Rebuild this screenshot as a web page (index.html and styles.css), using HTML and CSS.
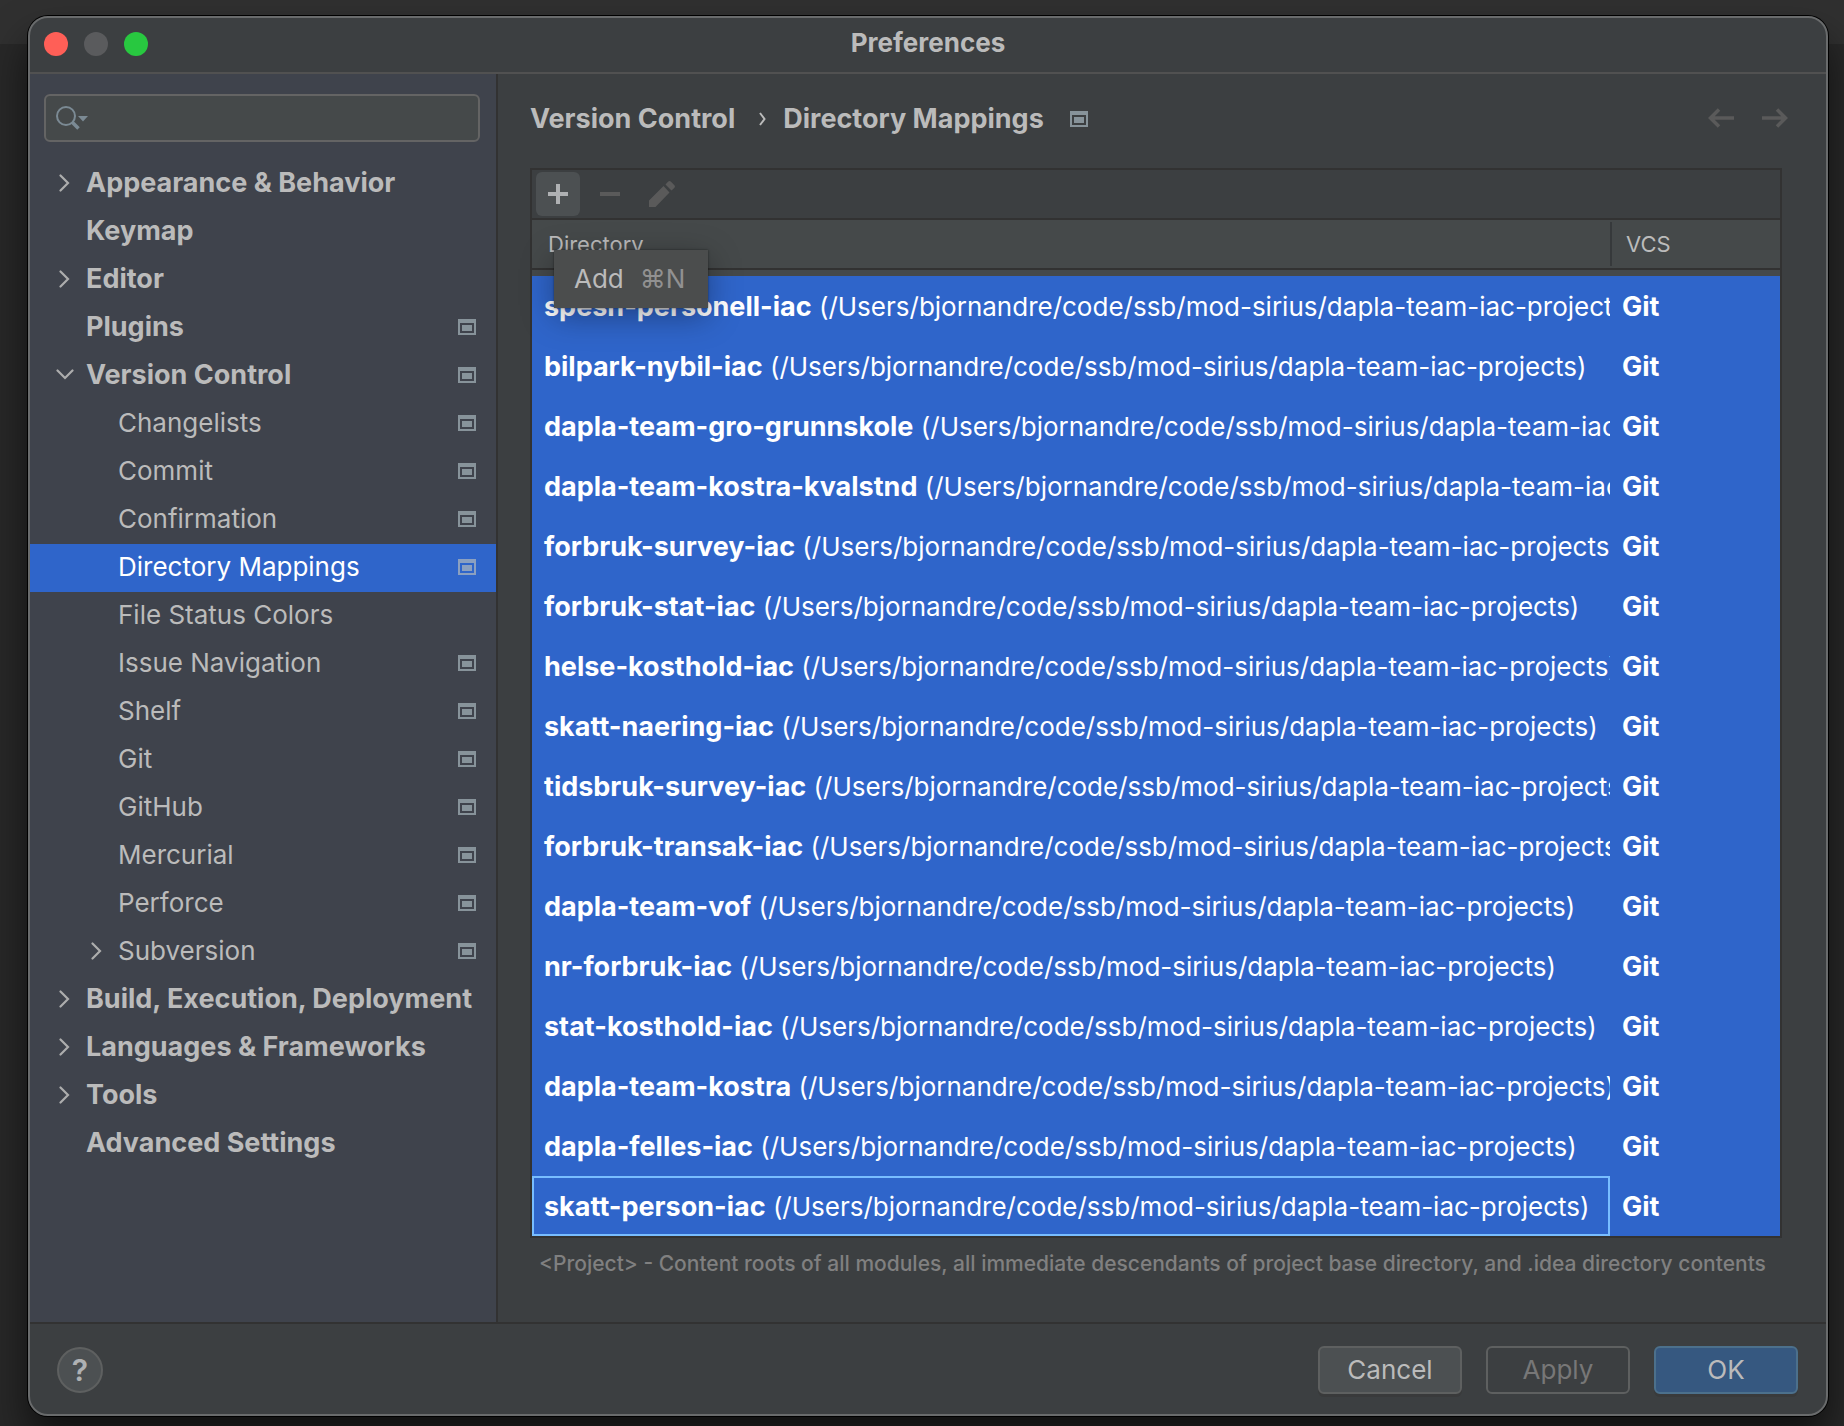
FILE: index.html
```html
<!DOCTYPE html>
<html lang="en">
<head>
<meta charset="utf-8">
<title>Preferences</title>
<link rel="stylesheet" href="styles.css">
</head>
<body>
<svg class="sprite" aria-hidden="true">
  <symbol id="closed" viewBox="0 0 18 18"><path d="M4.500 1.500L12 9L4.500 16.500" fill="none" stroke="currentColor" stroke-width="2.200" stroke-linecap="round"/></symbol>
  <symbol id="open" viewBox="0 0 18 18"><path d="M1.500 4.500L9 12L16.500 4.500" fill="none" stroke="currentColor" stroke-width="2.200" stroke-linecap="round"/></symbol>
  <symbol id="project" viewBox="0 0 18 16"><path d="M0 0H18V16H0ZM2 4V14H16V4Z" fill="currentColor" fill-rule="evenodd"/><path d="M4 6H14V12H4Z" fill="currentColor"/></symbol>
</svg>
<main class="window">
  <header class="titlebar">
    <div class="lights">
      <button class="light light-close" aria-label="Close"></button>
      <button class="light light-min" aria-label="Minimize" disabled></button>
      <button class="light light-zoom" aria-label="Zoom"></button>
    </div>
    <h1 class="title">Preferences</h1>
  </header>
  <div class="body">
    <nav class="sidebar">
      <div class="search">
        <svg width="34" height="26" viewBox="0 0 34 26" aria-hidden="true"><circle cx="10" cy="11" r="9" fill="none" stroke="#7b8a94" stroke-width="2"/><path d="M16 17L22.500 23.500" stroke="#7b8a94" stroke-width="3.500"/><path d="M22 11H32L27 16.500Z" fill="#7b8a94"/></svg>
        <input class="search-input" type="text" aria-label="Search settings">
      </div>
      <ul class="tree">
        <li><a class="row group" href="#"><svg class="arrow"><use href="#closed"/></svg><span class="label">Appearance &amp; Behavior</span></a></li>
        <li><a class="row group" href="#"><span class="arrow"></span><span class="label">Keymap</span></a></li>
        <li><a class="row group" href="#"><svg class="arrow"><use href="#closed"/></svg><span class="label">Editor</span></a></li>
        <li><a class="row group" href="#"><span class="arrow"></span><span class="label">Plugins</span><svg class="mark"><use href="#project"/></svg></a></li>
        <li><a class="row group" href="#"><svg class="arrow"><use href="#open"/></svg><span class="label">Version Control</span><svg class="mark"><use href="#project"/></svg></a>
          <ul class="subtree">
            <li><a class="row" href="#"><span class="arrow"></span><span class="label">Changelists</span><svg class="mark"><use href="#project"/></svg></a></li>
            <li><a class="row" href="#"><span class="arrow"></span><span class="label">Commit</span><svg class="mark"><use href="#project"/></svg></a></li>
            <li><a class="row" href="#"><span class="arrow"></span><span class="label">Confirmation</span><svg class="mark"><use href="#project"/></svg></a></li>
            <li><a class="row selected" href="#" aria-current="page"><span class="arrow"></span><span class="label">Directory Mappings</span><svg class="mark"><use href="#project"/></svg></a></li>
            <li><a class="row" href="#"><span class="arrow"></span><span class="label">File Status Colors</span></a></li>
            <li><a class="row" href="#"><span class="arrow"></span><span class="label">Issue Navigation</span><svg class="mark"><use href="#project"/></svg></a></li>
            <li><a class="row" href="#"><span class="arrow"></span><span class="label">Shelf</span><svg class="mark"><use href="#project"/></svg></a></li>
            <li><a class="row" href="#"><span class="arrow"></span><span class="label">Git</span><svg class="mark"><use href="#project"/></svg></a></li>
            <li><a class="row" href="#"><span class="arrow"></span><span class="label">GitHub</span><svg class="mark"><use href="#project"/></svg></a></li>
            <li><a class="row" href="#"><span class="arrow"></span><span class="label">Mercurial</span><svg class="mark"><use href="#project"/></svg></a></li>
            <li><a class="row" href="#"><span class="arrow"></span><span class="label">Perforce</span><svg class="mark"><use href="#project"/></svg></a></li>
            <li><a class="row" href="#"><svg class="arrow"><use href="#closed"/></svg><span class="label">Subversion</span><svg class="mark"><use href="#project"/></svg></a></li>
          </ul>
        </li>
        <li><a class="row group" href="#"><svg class="arrow"><use href="#closed"/></svg><span class="label">Build, Execution, Deployment</span></a></li>
        <li><a class="row group" href="#"><svg class="arrow"><use href="#closed"/></svg><span class="label">Languages &amp; Frameworks</span></a></li>
        <li><a class="row group" href="#"><svg class="arrow"><use href="#closed"/></svg><span class="label">Tools</span></a></li>
        <li><a class="row group" href="#"><span class="arrow"></span><span class="label">Advanced Settings</span></a></li>
      </ul>
    </nav>
    <section class="content">
      <div class="crumbs">
        <a class="crumb" href="#">Version Control</a>
        <svg class="crumb-sep" width="8" height="16" viewBox="0 0 8 16" aria-hidden="true"><path d="M1 2L5.500 8L1 14" fill="none" stroke="currentColor" stroke-width="2"/></svg>
        <h2 class="crumb">Directory Mappings</h2>
        <svg class="mark crumb-mark"><use href="#project"/></svg>
        <div class="history">
          <button class="nav-button" aria-label="Back" disabled><svg width="26" height="20" viewBox="0 0 26 20"><path d="M26 10H3M11 1.500L2.500 10L11 18.500" fill="none" stroke="currentColor" stroke-width="3.500"/></svg></button>
          <button class="nav-button" aria-label="Forward" disabled><svg width="26" height="20" viewBox="0 0 26 20"><path d="M0 10H23M15 1.500L23.500 10L15 18.500" fill="none" stroke="currentColor" stroke-width="3.500"/></svg></button>
        </div>
      </div>
      <div class="panel">
        <div class="toolbar">
          <div class="add-wrap">
            <button class="tool tool-active" aria-label="Add" aria-describedby="add-tip"><svg width="20" height="20" viewBox="0 0 20 20"><path d="M10 0V20M0 10H20" stroke="#afb1b3" stroke-width="4"/></svg></button>
            <div class="tooltip" id="add-tip" role="tooltip"><span>Add</span><span class="shortcut">⌘N</span></div>
          </div>
          <button class="tool" aria-label="Remove" disabled><svg width="20" height="20" viewBox="0 0 20 20"><path d="M0 10H20" stroke="#5a5a5a" stroke-width="4"/></svg></button>
          <button class="tool" aria-label="Edit" disabled><svg width="26" height="26" viewBox="0 0 26 26"><path d="M0 19.500L14.500 5L20.500 11.500L6.500 26H0ZM16.500 3.500L19 .8Q20.500-.6 22 .8L25.200 4Q26.700 5.500 25.200 7L22.500 9.500Z" fill="#5a5a5a"/></svg></button>
        </div>
        <table class="mappings">
          <thead><tr><th scope="col">Directory</th><th class="vcs" scope="col">VCS</th></tr></thead>
          <tbody>
            <tr><td><b>spesh-personell-iac</b> (/Users/bjornandre/code/ssb/mod-sirius/dapla-team-iac-projects)</td><td>Git</td></tr>
            <tr><td><b>bilpark-nybil-iac</b> (/Users/bjornandre/code/ssb/mod-sirius/dapla-team-iac-projects)</td><td>Git</td></tr>
            <tr><td><b>dapla-team-gro-grunnskole</b> (/Users/bjornandre/code/ssb/mod-sirius/dapla-team-iac-projects)</td><td>Git</td></tr>
            <tr><td><b>dapla-team-kostra-kvalstnd</b> (/Users/bjornandre/code/ssb/mod-sirius/dapla-team-iac-projects)</td><td>Git</td></tr>
            <tr><td><b>forbruk-survey-iac</b> (/Users/bjornandre/code/ssb/mod-sirius/dapla-team-iac-projects)</td><td>Git</td></tr>
            <tr><td><b>forbruk-stat-iac</b> (/Users/bjornandre/code/ssb/mod-sirius/dapla-team-iac-projects)</td><td>Git</td></tr>
            <tr><td><b>helse-kosthold-iac</b> (/Users/bjornandre/code/ssb/mod-sirius/dapla-team-iac-projects)</td><td>Git</td></tr>
            <tr><td><b>skatt-naering-iac</b> (/Users/bjornandre/code/ssb/mod-sirius/dapla-team-iac-projects)</td><td>Git</td></tr>
            <tr><td><b>tidsbruk-survey-iac</b> (/Users/bjornandre/code/ssb/mod-sirius/dapla-team-iac-projects)</td><td>Git</td></tr>
            <tr><td><b>forbruk-transak-iac</b> (/Users/bjornandre/code/ssb/mod-sirius/dapla-team-iac-projects)</td><td>Git</td></tr>
            <tr><td><b>dapla-team-vof</b> (/Users/bjornandre/code/ssb/mod-sirius/dapla-team-iac-projects)</td><td>Git</td></tr>
            <tr><td><b>nr-forbruk-iac</b> (/Users/bjornandre/code/ssb/mod-sirius/dapla-team-iac-projects)</td><td>Git</td></tr>
            <tr><td><b>stat-kosthold-iac</b> (/Users/bjornandre/code/ssb/mod-sirius/dapla-team-iac-projects)</td><td>Git</td></tr>
            <tr><td><b>dapla-team-kostra</b> (/Users/bjornandre/code/ssb/mod-sirius/dapla-team-iac-projects)</td><td>Git</td></tr>
            <tr><td><b>dapla-felles-iac</b> (/Users/bjornandre/code/ssb/mod-sirius/dapla-team-iac-projects)</td><td>Git</td></tr>
            <tr><td class="focused"><b>skatt-person-iac</b> (/Users/bjornandre/code/ssb/mod-sirius/dapla-team-iac-projects)</td><td>Git</td></tr>
          </tbody>
        </table>
      </div>
      <p class="hint">&lt;Project&gt; - Content roots of all modules, all immediate descendants of project base directory, and .idea directory contents</p>
    </section>
  </div>
  <footer class="footer">
    <button class="help" aria-label="Help">?</button>
    <div class="actions">
      <button class="button">Cancel</button>
      <button class="button" disabled>Apply</button>
      <button class="button primary">OK</button>
    </div>
  </footer>
</main>
</body>
</html>
```
FILE: styles.css
```css
* { box-sizing: border-box; }

body {
  margin: 0;
  min-height: 100vh;
  padding: 16px 16px 10px 28px;
  display: flex;
  background: linear-gradient(#303030 44px, #282828 44px);
  color: #bbbbbb;
  font-family: Inter, "Liberation Sans", sans-serif;
  font-size: 26px;
  line-height: 32px;
}

button { font: inherit; color: inherit; border: 0; padding: 0; background: none; }
a { color: inherit; text-decoration: none; }
ul { list-style: none; margin: 0; padding: 0; }
svg { display: block; flex: none; }
.sprite { position: absolute; width: 0; height: 0; }

.window {
  flex: 1;
  min-width: 0;
  display: flex;
  flex-direction: column;
  border: 2px solid #696b6c;
  border-radius: 20px;
  background: #3c3f41;
  box-shadow: 0 0 0 1px #000000, 0 24px 40px rgba(0, 0, 0, 0.6);
}

.titlebar {
  display: grid;
  grid-template-columns: 1fr auto 1fr;
  align-items: center;
  height: 56px;
  padding: 0 14px 2px;
  border-bottom: 2px solid #515151;
}
.lights { display: flex; gap: 16px; }
.light { width: 24px; height: 24px; border-radius: 50%; }
.light-close { background: #ff5f57; }
.light-min { background: #5a5b5d; }
.light-zoom { background: #28c840; }
.title { margin: 0; padding-bottom: 2px; font-size: 26px; font-weight: 700; }

.body { flex: 1; display: flex; }

.sidebar {
  flex: none;
  width: 468px;
  padding-top: 20px;
  border-right: 2px solid #323232;
  background: #3f434c;
}
.search {
  display: flex;
  align-items: center;
  gap: 8px;
  height: 48px;
  margin: 0 16px 18px 14px;
  padding: 0 10px;
  border: 2px solid #646464;
  border-radius: 6px;
  background: #45494a;
}
.search-input {
  flex: 1;
  min-width: 0;
  border: 0;
  outline: 0;
  background: none;
  color: inherit;
  font: inherit;
}

.row {
  display: flex;
  align-items: center;
  gap: 12px;
  height: 48px;
  padding: 0 20px 2px 26px;
  white-space: nowrap;
}
.group { font-size: 27px; font-weight: 700; }
.subtree .row { padding-left: 58px; }
.row.selected { background: #2f65ca; color: #ffffff; }
.arrow { flex: none; width: 18px; height: 18px; color: #adadad; }
.label { flex: 1; min-width: 0; }
.mark { flex: none; width: 18px; height: 16px; color: #87939a; }
.selected .mark { color: #8ba0c0; }

.content { flex: 1; min-width: 0; padding: 20px 44px 0 32px; }
.crumbs { display: flex; align-items: center; height: 50px; margin-bottom: 24px; }
.crumb { margin: 0; font-size: 27px; font-weight: 700; }
.crumb-sep { margin: 0 16px 0 24px; }
.crumb-mark { margin-left: 26px; }
.history {
  display: flex;
  gap: 28px;
  margin: 0 -6px 2px auto;
  color: #5a5a5a;
}
.nav-button { color: inherit; }

.panel { border: 2px solid #323232; }
.toolbar {
  display: flex;
  align-items: center;
  gap: 8px;
  height: 50px;
  padding: 0 4px;
  border-bottom: 2px solid #323232;
}
.tool {
  display: flex;
  align-items: center;
  justify-content: center;
  width: 44px;
  height: 44px;
  border-radius: 6px;
}
.tool-active { background: #4c5052; }
.add-wrap { position: relative; }
.tooltip {
  position: absolute;
  left: 18px;
  top: 78px;
  z-index: 1;
  display: flex;
  align-items: center;
  gap: 16px;
  width: 154px;
  height: 58px;
  padding: 0 20px;
  background: #4b4d4d;
  box-shadow: 0 0 2px rgba(0, 0, 0, 0.5), 0 8px 32px rgba(0, 0, 0, 0.35);
}
.shortcut { color: #919191; }

.mappings {
  width: 100%;
  table-layout: fixed;
  border-spacing: 0;
  background: #45494a;
}
th {
  height: 50px;
  padding: 0 16px;
  border-bottom: 2px solid #323232;
  text-align: left;
  font-size: 22px;
  font-weight: 400;
}
.vcs {
  width: 170px;
  background: linear-gradient(#36393b, #36393b) 0 2px / 2px 44px no-repeat;
}
tbody::before { content: ""; display: table-row; height: 6px; }
td {
  height: 60px;
  padding: 2px 12px 0;
  overflow: hidden;
  background: #2f65ca;
  color: #ffffff;
  white-space: nowrap;
}
td:first-child { padding-right: 0; }
td:last-child, b { font-size: 27px; font-weight: 700; }
td.focused { box-shadow: inset 0 0 0 2px #78bdff; }

.hint {
  margin: 10px 0 0;
  padding-left: 9px;
  color: #808080;
  font-size: 21px;
  font-weight: 500;
  white-space: nowrap;
}

.footer {
  display: flex;
  align-items: center;
  justify-content: space-between;
  padding: 22px 28px 20px 27px;
  border-top: 2px solid #323232;
}
.help {
  width: 46px;
  height: 46px;
  border: 2px solid #5e6060;
  border-radius: 50%;
  background: #4c5052;
  color: #afb1b3;
  font-size: 30px;
  font-weight: 600;
}
.actions { display: flex; gap: 24px; }
.button {
  width: 144px;
  height: 48px;
  border: 2px solid #5e6060;
  border-radius: 6px;
  background: #4c5052;
  box-shadow: 0 3px 0 rgba(54, 54, 54, 0.5);
}
.button:disabled { background: none; color: #777777; box-shadow: none; }
.primary { border-color: #4c708c; background: #365880; }
```
